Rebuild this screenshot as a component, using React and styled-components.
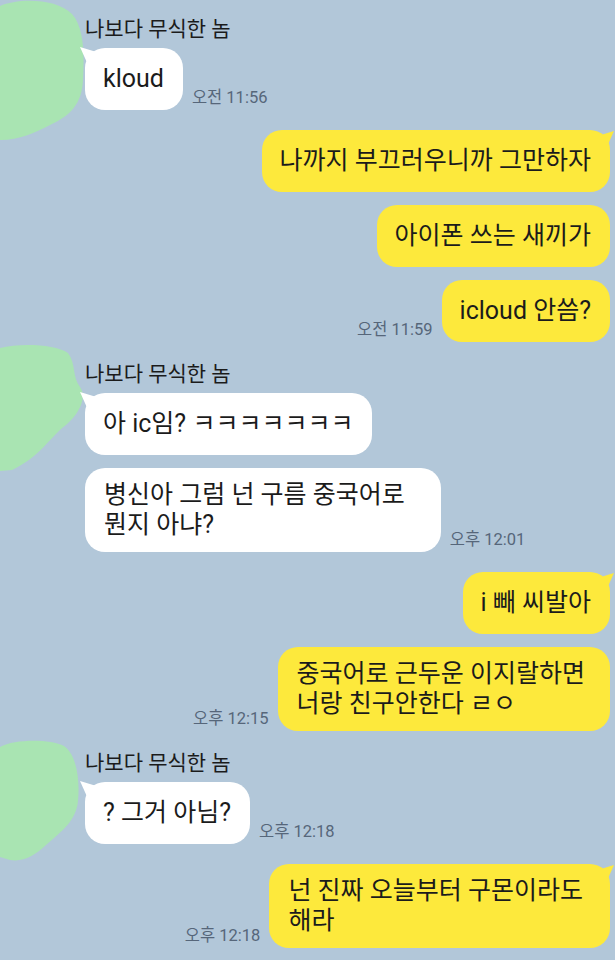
import React from "react";
import styled, { createGlobalStyle, css } from "styled-components";

const GlobalStyle = createGlobalStyle`
  body {
    margin: 0;
    background: #b2c7d9;
  }
`;

const Screen = styled.div`
  width: 615px;
  height: 960px;
  overflow: hidden;
  box-sizing: border-box;
  padding: 17px 5px 0 0;
  background: #b2c7d9;
  font-family: Roboto, "Noto Sans CJK KR", sans-serif;
  color: #1b1b1b;
  display: flex;
  flex-direction: column;
  gap: 20px;
`;

const Incoming = styled.div`
  display: flex;
  align-items: flex-start;
`;

const Avatar = styled.div`
  width: 85px;
  flex-shrink: 0;
  height: 24px;

  svg {
    display: block;
    overflow: visible;
  }
`;

const Column = styled.div`
  display: flex;
  flex-direction: column;
  gap: 13px;
  align-items: ${(p) => (p.$right ? "flex-end" : "flex-start")};
`;

const Name = styled.div`
  font-size: 21px;
  line-height: 24px;
  margin-bottom: -6px;
`;

const Row = styled.div`
  display: flex;
  align-items: flex-end;
  gap: 9px;
  flex-direction: ${(p) => (p.$right ? "row-reverse" : "row")};
`;

const Bubble = styled.div`
  position: relative;
  font-size: 25px;
  line-height: 30px;
  padding: ${(p) =>
    p.$multi ? `12px ${p.$padRight || 27}px 12px 19px` : "16px 19px 16px 18px"};
  border-radius: 20px;
  background: ${(p) => (p.$right ? "#fde93c" : "#ffffff")};
  white-space: pre;

  ${(p) =>
    p.$tail &&
    !p.$right &&
    css`
      &::before {
        content: "";
        position: absolute;
        left: -5px;
        top: -1px;
        width: 14px;
        height: 14px;
        background: #ffffff;
        clip-path: polygon(0 0, 100% 30%, 100% 100%, 45% 100%);
      }
    `}

  ${(p) =>
    p.$tail &&
    p.$right &&
    css`
      &::after {
        content: "";
        position: absolute;
        right: -4px;
        top: 1px;
        width: 14px;
        height: 14px;
        background: #fde93c;
        clip-path: polygon(100% 0, 55% 100%, 0 100%, 0 30%);
      }
    `}
`;

const Time = styled.span`
  font-size: 16.5px;
  line-height: 18px;
  color: #56667a;
  margin-bottom: 3px;
  white-space: nowrap;
`;

const Blob = ({ d, top, height }) => (
  <svg width="90" height={height} style={{ marginTop: top }}>
    <path d={d} fill="#a9e4b2" />
  </svg>
);

const blobs = [
  {
    top: -17,
    height: 145,
    d: "M0,6 C18,-2 56,-2 72,14 C85,28 84,58 83,80 C82,104 70,116 50,125 C34,133 20,140 0,140 Z",
  },
  {
    top: -17,
    height: 128,
    d: "M0,3 C20,-2 55,-1 68,8 C76,18 72,32 80,42 C87,52 80,68 66,80 C50,92 40,112 12,125 L0,126 Z",
  },
  {
    top: -10,
    height: 122,
    d: "M0,6 C15,-2 50,-2 64,5 C77,14 80,40 78,60 C76,80 62,90 46,104 C34,115 24,121 10,119 L0,116 Z",
  },
];

const chat = [
  {
    from: "them",
    blob: 0,
    items: [{ text: "kloud", time: "오전 11:56" }],
  },
  {
    from: "me",
    items: [
      { text: "나까지 부끄러우니까 그만하자" },
      { text: "아이폰 쓰는 새끼가" },
      { text: "icloud 안씀?", time: "오전 11:59" },
    ],
  },
  {
    from: "them",
    blob: 1,
    items: [
      { text: "아 ic임? ㅋㅋㅋㅋㅋㅋㅋ" },
      {
        text: "병신아 그럼 넌 구름 중국어로\n뭔지 아냐?",
        time: "오후 12:01",
        multi: true,
        padRight: 36,
      },
    ],
  },
  {
    from: "me",
    items: [
      { text: "i 빼 씨발아" },
      {
        text: "중국어로 근두운 이지랄하면\n너랑 친구안한다 ㄹㅇ",
        time: "오후 12:15",
        multi: true,
        padRight: 25,
      },
    ],
  },
  {
    from: "them",
    blob: 2,
    items: [{ text: "? 그거 아님?", time: "오후 12:18" }],
  },
  {
    from: "me",
    items: [
      { text: "넌 진짜 오늘부터 구몬이라도\n해라", time: "오후 12:18", multi: true },
    ],
  },
];

const Messages = ({ items, right }) =>
  items.map((m, i) => (
    <Row key={i} $right={right}>
      <Bubble $right={right} $tail={i === 0} $multi={m.multi} $padRight={m.padRight}>
        {m.text}
      </Bubble>
      {m.time && <Time>{m.time}</Time>}
    </Row>
  ));

export default function App() {
  return (
    <>
      <GlobalStyle />
      <Screen>
        {chat.map((g, i) =>
          g.from === "them" ? (
            <Incoming key={i}>
              <Avatar>
                <Blob {...blobs[g.blob]} />
              </Avatar>
              <Column>
                <Name>나보다 무식한 놈</Name>
                <Messages items={g.items} />
              </Column>
            </Incoming>
          ) : (
            <Column key={i} $right>
              <Messages items={g.items} right />
            </Column>
          )
        )}
      </Screen>
    </>
  );
}
